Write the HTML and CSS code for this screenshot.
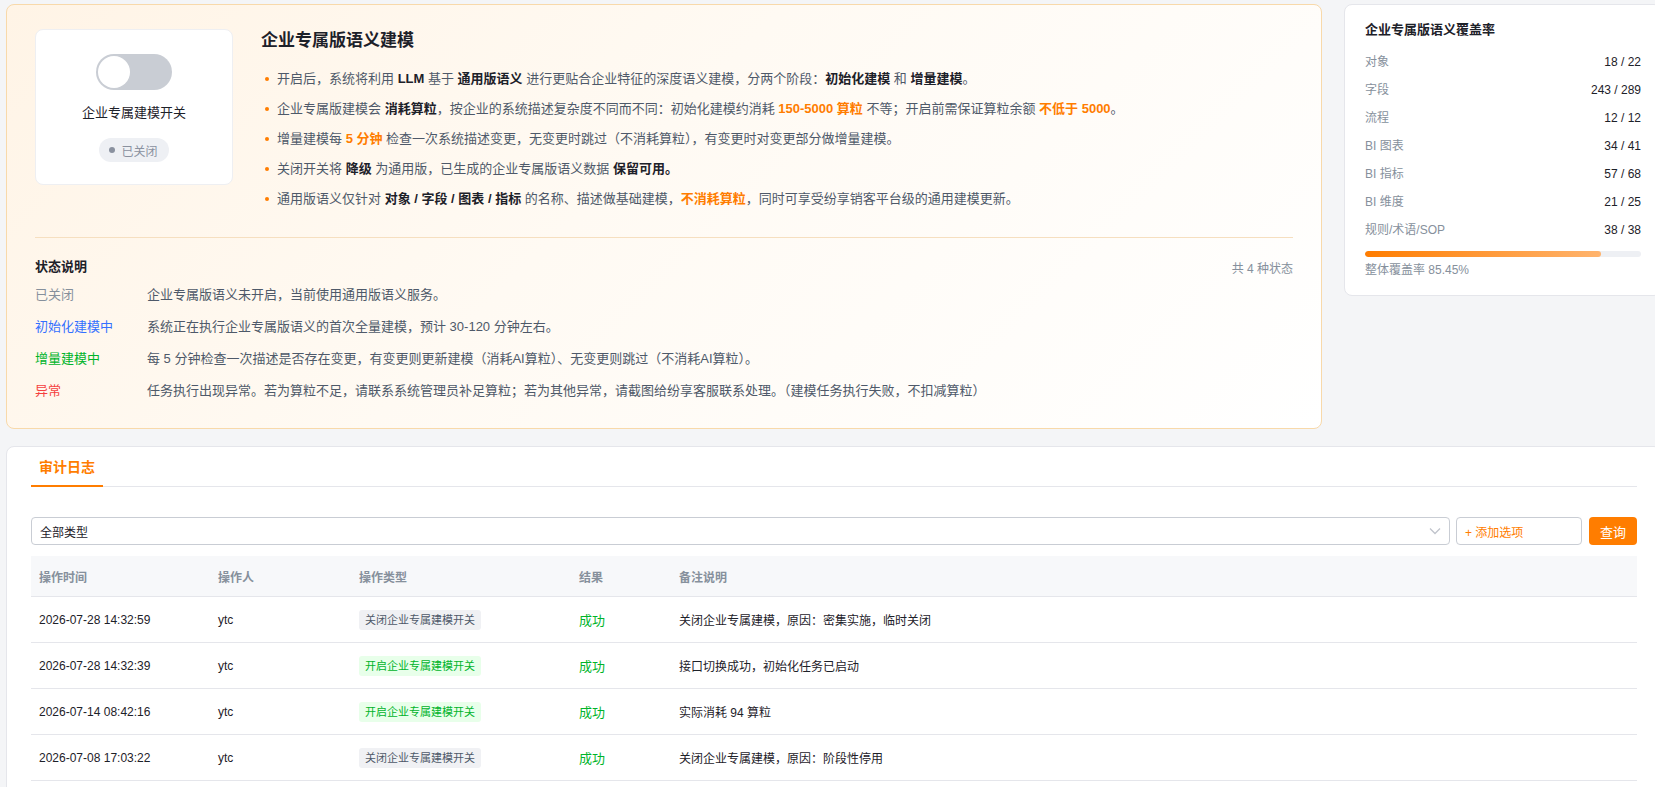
FILE: index.html
```html
<!DOCTYPE html>
<html lang="zh-CN">
  <head>
    <meta charset="UTF-8" />
    <meta name="viewport" content="width=device-width, initial-scale=1.0" />
    <title>企业专属版语义建模</title>
    <link rel="stylesheet" href="styles.css">
  </head>
  <body>
    <div class="page">
      <div class="top">
        <section class="model-card">
          <div class="intro">
            <div class="switch-card">
              <span class="switch"><span class="knob"></span></span>
              <div class="switch-label">企业专属建模开关</div>
              <span class="state-badge"><i></i>已关闭</span>
            </div>
            <div class="intro-text">
              <h2>企业专属版语义建模</h2>
              <ul class="notes">
                <li>开启后，系统将利用 <b>LLM</b> 基于 <b>通用版语义</b> 进行更贴合企业特征的深度语义建模，分两个阶段：<b>初始化建模</b> 和 <b>增量建模</b>。</li>
                <li>企业专属版建模会 <b>消耗算粒</b>，按企业的系统描述复杂度不同而不同：初始化建模约消耗 <em>150-5000 算粒</em> 不等；开启前需保证算粒余额 <em>不低于 5000</em>。</li>
                <li>增量建模每 <em>5 分钟</em> 检查一次系统描述变更，无变更时跳过（不消耗算粒），有变更时对变更部分做增量建模。</li>
                <li>关闭开关将 <b>降级</b> 为通用版，已生成的企业专属版语义数据 <b>保留可用。</b></li>
                <li>通用版语义仅针对 <b>对象 / 字段 / 图表 / 指标</b> 的名称、描述做基础建模，<em>不消耗算粒</em>，同时可享受纷享销客平台级的通用建模更新。</li>
              </ul>
            </div>
          </div>

          <div class="status">
            <div class="status-head">
              <h3>状态说明</h3>
              <span>共 4 种状态</span>
            </div>
            <div class="status-row">
              <span class="st st-off">已关闭</span>
              <span>企业专属版语义未开启，当前使用通用版语义服务。</span>
            </div>
            <div class="status-row">
              <span class="st st-init">初始化建模中</span>
              <span>系统正在执行企业专属版语义的首次全量建模，预计 30-120 分钟左右。</span>
            </div>
            <div class="status-row">
              <span class="st st-inc">增量建模中</span>
              <span>每 5 分钟检查一次描述是否存在变更，有变更则更新建模（消耗AI算粒）、无变更则跳过（不消耗AI算粒）。</span>
            </div>
            <div class="status-row">
              <span class="st st-err">异常</span>
              <span>任务执行出现异常。若为算粒不足，请联系系统管理员补足算粒；若为其他异常，请截图给纷享客服联系处理。（建模任务执行失败，不扣减算粒）</span>
            </div>
          </div>
        </section>

        <aside class="coverage">
          <h3>企业专属版语义覆盖率</h3>
          <div class="cov-row"><span>对象</span><span>18 / 22</span></div>
          <div class="cov-row"><span>字段</span><span>243 / 289</span></div>
          <div class="cov-row"><span>流程</span><span>12 / 12</span></div>
          <div class="cov-row"><span>BI 图表</span><span>34 / 41</span></div>
          <div class="cov-row"><span>BI 指标</span><span>57 / 68</span></div>
          <div class="cov-row"><span>BI 维度</span><span>21 / 25</span></div>
          <div class="cov-row"><span>规则/术语/SOP</span><span>38 / 38</span></div>
          <div class="bar"><div class="bar-fill" style="width: 85.45%"></div></div>
          <div class="cov-total">整体覆盖率 85.45%</div>
        </aside>
      </div>

      <section class="audit">
        <div class="tabs">
          <span class="tab active">审计日志</span>
        </div>

        <div class="toolbar">
          <div class="select">
            <span>全部类型</span>
            <svg width="12" height="8" viewBox="0 0 12 8"><path d="M1 1.5l5 5 5-5" fill="none" stroke="#c0c4cc" stroke-width="1.3"/></svg>
          </div>
          <button class="add-btn">+ 添加选项</button>
          <button class="query-btn">查询</button>
        </div>

        <table class="log-table">
          <thead>
            <tr>
              <th class="c-time">操作时间</th>
              <th class="c-user">操作人</th>
              <th class="c-type">操作类型</th>
              <th class="c-result">结果</th>
              <th>备注说明</th>
            </tr>
          </thead>
          <tbody>
            <tr>
              <td>2026-07-28 14:32:59</td>
              <td>ytc</td>
              <td><span class="tag tag-off">关闭企业专属建模开关</span></td>
              <td class="ok">成功</td>
              <td>关闭企业专属建模，原因：密集实施，临时关闭</td>
            </tr>
            <tr>
              <td>2026-07-28 14:32:39</td>
              <td>ytc</td>
              <td><span class="tag tag-on">开启企业专属建模开关</span></td>
              <td class="ok">成功</td>
              <td>接口切换成功，初始化任务已启动</td>
            </tr>
            <tr>
              <td>2026-07-14 08:42:16</td>
              <td>ytc</td>
              <td><span class="tag tag-on">开启企业专属建模开关</span></td>
              <td class="ok">成功</td>
              <td>实际消耗 94 算粒</td>
            </tr>
            <tr>
              <td>2026-07-08 17:03:22</td>
              <td>ytc</td>
              <td><span class="tag tag-off">关闭企业专属建模开关</span></td>
              <td class="ok">成功</td>
              <td>关闭企业专属建模，原因：阶段性停用</td>
            </tr>
          </tbody>
        </table>
      </section>
    </div>
  </body>
</html>
```

FILE: styles.css
```css
body {
  margin: 0;
  background: #f4f5f7;
  font-family: "Liberation Sans", "Noto Sans CJK SC", sans-serif;
  color: #1d2129;
  overflow: hidden;
}

.page {
  width: 1656px;
  padding: 4px 0 0 6px;
}

.top {
  display: flex;
  gap: 22px;
  align-items: flex-start;
}

/* 左侧说明卡片 */
.model-card {
  flex: 1;
  border: 1px solid #f8d9aa;
  border-radius: 8px;
  background: linear-gradient(135deg, #fff4e6 0%, #fffaf3 45%, #ffffff 100%);
  padding: 24px 28px 27px 28px;
}

.intro {
  display: flex;
  gap: 28px;
  align-items: flex-start;
}

.switch-card {
  width: 198px;
  height: 156px;
  box-sizing: border-box;
  flex: none;
  background: #fff;
  border: 1px solid #eeeff2;
  border-radius: 8px;
  display: flex;
  flex-direction: column;
  align-items: center;
  padding-top: 24px;
}

.switch {
  width: 76px;
  height: 36px;
  border-radius: 18px;
  background: #c9cdd4;
  position: relative;
}

.knob {
  position: absolute;
  left: 2px;
  top: 2px;
  width: 32px;
  height: 32px;
  border-radius: 50%;
  background: #fff;
}

.switch-label {
  margin-top: 13px;
  font-size: 13px;
  line-height: 20px;
  color: #1d2129;
}

.state-badge {
  margin-top: 15px;
  height: 24px;
  display: flex;
  align-items: center;
  gap: 6px;
  padding: 0 11px 0 10px;
  border-radius: 12px;
  background: #eef0f4;
  color: #8a919f;
  font-size: 12px;
}

.state-badge i {
  width: 6px;
  height: 6px;
  border-radius: 50%;
  background: #8a919f;
}

.intro-text h2 {
  margin: 0;
  font-size: 17px;
  line-height: 24px;
  font-weight: bold;
  color: #1d2129;
}

.notes {
  list-style: none;
  margin: 16px 0 0;
  padding: 0;
}

.notes li {
  position: relative;
  padding-left: 16px;
  font-size: 13px;
  line-height: 20px;
  color: #4e5969;
  margin-bottom: 10px;
}

.notes li:last-child {
  margin-bottom: 0;
}

.notes li::before {
  content: "";
  position: absolute;
  left: 4px;
  top: 8px;
  width: 4px;
  height: 4px;
  border-radius: 50%;
  background: #ff7d00;
}

.notes b {
  color: #1d2129;
}

.notes em {
  font-style: normal;
  font-weight: bold;
  color: #ff7d00;
}

.status {
  margin-top: 28px;
  border-top: 1px solid #f6dfc0;
  padding-top: 19px;
}

.status-head {
  display: flex;
  justify-content: space-between;
  align-items: center;
  margin-bottom: 8px;
}

.status-head h3 {
  margin: 0;
  font-size: 13px;
  line-height: 20px;
  color: #1d2129;
}

.status-head span {
  font-size: 12px;
  color: #86909c;
}

.status-row {
  display: flex;
  font-size: 13px;
  line-height: 20px;
  color: #4e5969;
  margin-bottom: 12px;
}

.status-row:last-child {
  margin-bottom: 0;
}

.st {
  width: 112px;
  flex: none;
}

.st-off { color: #86909c; }
.st-init { color: #3370ff; }
.st-inc { color: #00b42a; }
.st-err { color: #f53f3f; }

/* 右侧覆盖率 */
.coverage {
  width: 318px;
  box-sizing: border-box;
  background: #fff;
  border: 1px solid #e5e6eb;
  border-radius: 8px;
  padding: 15px 20px 16px;
}

.coverage h3 {
  margin: 0 0 12px;
  font-size: 13px;
  line-height: 20px;
}

.cov-row {
  display: flex;
  justify-content: space-between;
  font-size: 12px;
  line-height: 20px;
  margin-bottom: 8px;
}

.cov-row span:first-child {
  color: #86909c;
}

.bar {
  margin-top: 11px;
  height: 6px;
  border-radius: 3px;
  background: #eef0f4;
  overflow: hidden;
}

.bar-fill {
  height: 100%;
  border-radius: 3px;
  background: linear-gradient(90deg, #ff7d00, #ffb46e);
}

.cov-total {
  margin-top: 4px;
  font-size: 12px;
  line-height: 18px;
  color: #86909c;
}

/* 审计日志 */
.audit {
  margin-top: 17px;
  background: #fff;
  border: 1px solid #e5e6eb;
  border-radius: 8px;
  padding: 0 24px 20px;
}

.tabs {
  display: flex;
  border-bottom: 1px solid #e5e6eb;
}

.tab {
  padding: 10px 8px 8px;
  font-size: 14px;
  line-height: 20px;
  font-weight: bold;
}

.tab.active {
  color: #ff7d00;
  border-bottom: 2px solid #ff7d00;
  margin-bottom: -1px;
}

.toolbar {
  display: flex;
  gap: 6px;
  margin-top: 30px;
}

.select {
  flex: 1;
  height: 28px;
  box-sizing: border-box;
  border: 1px solid #c9cdd4;
  border-radius: 4px;
  display: flex;
  align-items: center;
  justify-content: space-between;
  padding: 0 8px 0 8px;
  font-size: 12px;
}

button {
  font-family: inherit;
  height: 28px;
  border-radius: 4px;
  font-size: 12px;
  cursor: pointer;
}

.add-btn {
  width: 126px;
  text-align: left;
  padding: 0 8px;
  background: #fff;
  border: 1px solid #c9cdd4;
  color: #ff7d00;
}

.query-btn {
  width: 48px;
  margin-left: 1px;
  background: #ff7d00;
  border: none;
  color: #fff;
  font-size: 13px;
}

.log-table {
  width: 100%;
  margin-top: 11px;
  border-collapse: collapse;
  font-size: 12px;
}

.log-table th {
  height: 40px;
  padding: 0 8px;
  text-align: left;
  background: #f7f8fa;
  color: #86909c;
  font-weight: bold;
  border-bottom: 1px solid #e5e6eb;
}

.log-table td {
  height: 45px;
  padding: 0 8px;
  border-bottom: 1px solid #e5e6eb;
  color: #1d2129;
}

.log-table td.ok {
  color: #00b42a;
  font-size: 13px;
}

.c-time { width: 163px; }
.c-user { width: 125px; }
.c-type { width: 204px; }
.c-result { width: 84px; }

.tag {
  display: inline-block;
  height: 20px;
  line-height: 20px;
  padding: 0 6px;
  border-radius: 3px;
  font-size: 11px;
}

.tag-off {
  background: #f0f1f4;
  color: #4e5969;
}

.tag-on {
  background: #e8ffea;
  color: #00b42a;
}
```
